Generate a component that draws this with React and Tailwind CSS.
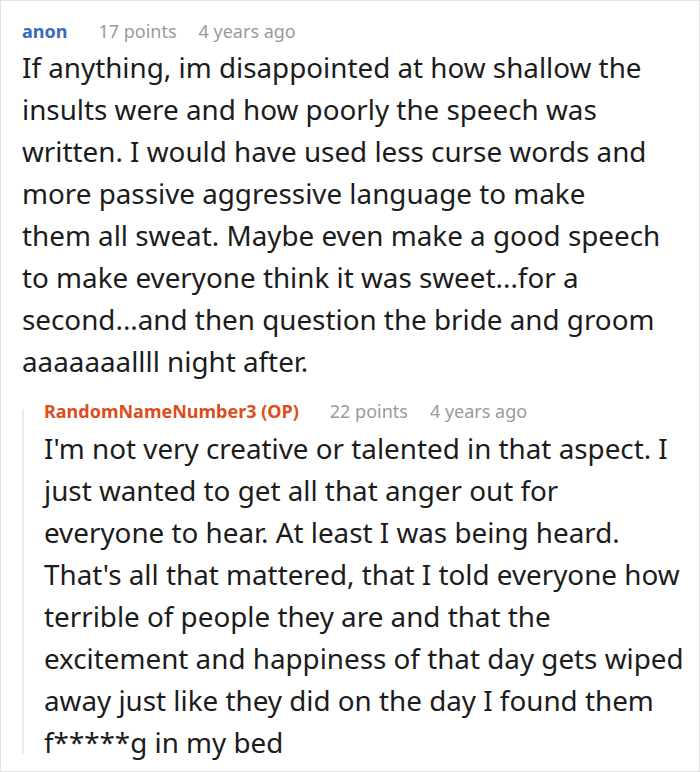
const Meta = ({ name, color, points, ago, className = "" }) => (
  <div className={`flex items-baseline text-[18px] leading-[26px] ${className}`}>
    <span className={`font-bold ${color}`}>{name}</span>
    <span className="ml-[31px] text-[#9a9a9a]">{points} points</span>
    <span className="ml-[22px] text-[#9a9a9a]">{ago}</span>
  </div>
)

const Body = ({ lines, className = "" }) => (
  <p className={`text-[27.8px] leading-[42px] whitespace-nowrap ${className}`}>
    {lines.map((l, i) => (
      <span key={i} className="block">
        {l}
      </span>
    ))}
  </p>
)

const comment = [
  "If anything, im disappointed at how shallow the",
  "insults were and how poorly the speech was",
  "written. I would have used less curse words and",
  "more passive aggressive language to make",
  "them all sweat. Maybe even make a good speech",
  "to make everyone think it was sweet...for a",
  "second...and then question the bride and groom",
  "aaaaaaallll night after.",
]

const reply = [
  "I'm not very creative or talented in that aspect. I",
  "just wanted to get all that anger out for",
  "everyone to hear. At least I was being heard.",
  "That's all that mattered, that I told everyone how",
  "terrible of people they are and that the",
  "excitement and happiness of that day gets wiped",
  "away just like they did on the day I found them",
  "f*****g in my bed",
]

export default function App() {
  return (
    <div
      className="w-[700px] h-[772px] border border-[#e2e2e2] pl-[21px] pr-[6px] pt-[17px] text-[#1c1c1c] bg-white overflow-hidden"
      style={{ fontFamily: '"Noto Sans", "Open Sans", sans-serif' }}
    >
      <Meta name="anon" color="text-[#3b6bb8]" points="17" ago="4 years ago" />
      <Body lines={comment} className="mt-[2px]" />
      <div className="mt-[27px] mb-[9px] flex flex-col border-l-2 border-[#ebebeb] pl-[20px]">
        <Meta
          name="RandomNameNumber3 (OP)"
          color="text-[#dd4d1a]"
          points="22"
          ago="4 years ago"
          className="-mt-[11px]"
        />
        <Body lines={reply} className="mt-[3px] -mb-[9px]" />
      </div>
    </div>
  )
}
